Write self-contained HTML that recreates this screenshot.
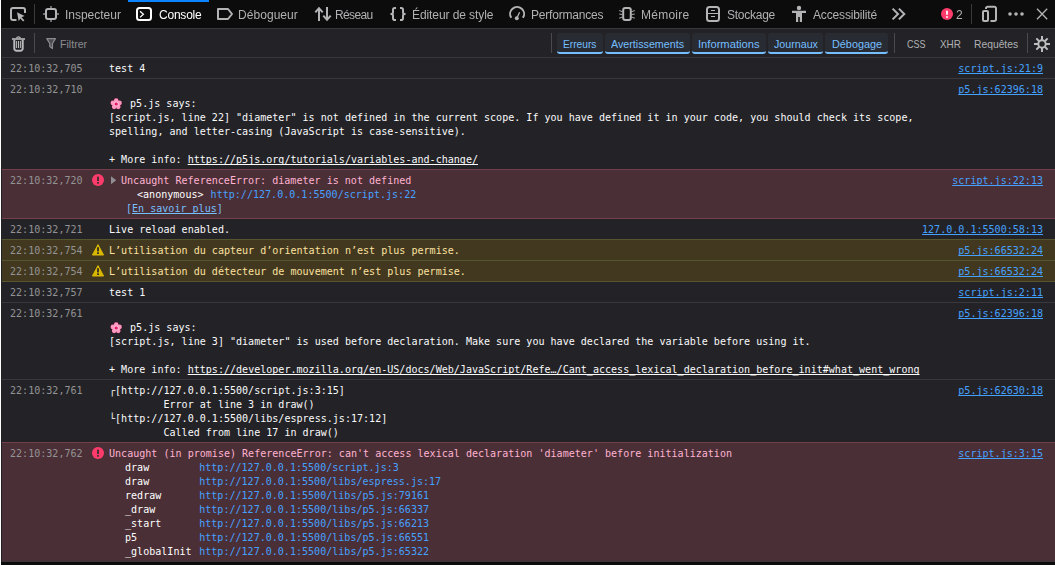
<!DOCTYPE html>
<html lang="fr">
<head>
<meta charset="utf-8">
<title>Console</title>
<style>
html,body{margin:0;padding:0;}
body{width:1055px;height:565px;overflow:hidden;background:#0c0c0d;position:relative;
  font-family:"Liberation Sans",sans-serif;font-size:12px;color:#b1b1b3;}
#edge0{position:absolute;left:0;top:0;width:1px;height:565px;background:#fff;z-index:50;}
#edge1{position:absolute;left:1px;top:28px;width:1px;height:534px;background:#222226;z-index:50;}
#tabs{position:absolute;left:2px;top:0;width:1053px;height:28px;background:#0c0c0d;border-bottom:1px solid #38383d;}
#filter{position:absolute;left:2px;top:29px;width:1053px;height:28px;background:#232327;border-bottom:1px solid #38383d;}
#out{position:absolute;left:2px;top:58px;width:1053px;height:504px;background:#232327;}
.tab{will-change:transform;position:absolute;top:1px;height:28px;line-height:29px;font-size:12px;color:#b1b1b3;white-space:nowrap;transform-origin:0 50%;}
.tab.sel{color:#fff;}
.ico{position:absolute;}
.vsep{position:absolute;width:1px;background:#38383d;}
.row{position:absolute;left:0;width:1053px;box-sizing:border-box;border-bottom:1px solid #38383d;
  font-family:"DejaVu Sans Mono","Liberation Mono",monospace;font-size:10.06px;line-height:14px;color:#fafafb;white-space:pre;}
.row.err{background:#4b2f36;border-top:1px solid #743e4c;border-bottom:1px solid #743e4c;color:#ffb3d2;z-index:2;}
.row.warn{background:#42381f;border-top:1px solid #56562e;border-bottom:1px solid #56562e;color:#fce19f;z-index:2;}
.ts{position:absolute;left:8px;top:4px;color:#939395;}
.msg{position:absolute;left:107px;top:4px;}
.loc{position:absolute;right:12px;top:4px;color:#45a1ff;text-decoration:underline;text-decoration-skip-ink:none;}
.fl{display:inline-block;vertical-align:top;position:relative;top:-0.5px;}
.u{text-decoration:underline;text-decoration-skip-ink:none;}
.fn{display:inline-block;width:74.2px;margin-left:16px;color:#fff;}
.lk{color:#45a1ff;}
.lm{color:#75bfff;}
.w{color:#fff;}
.fbtn{position:absolute;top:4px;height:21px;background:#292b33;border-radius:3px;box-sizing:border-box;border-bottom:2px solid #75bfff;}
.ftx{position:absolute;top:4px;height:22px;line-height:22px;font-size:11px;color:#b1b1b3;white-space:nowrap;transform-origin:0 50%;}
.ftx.on{color:#75bfff;}
.ftx.ph{color:#8c8c90;}
</style>
</head>
<body>
<div id="edge0"></div><div id="edge1"></div>
<div id="tabs">
<svg class="ico" style="left:0;top:0" width="1053" height="28" viewBox="2 0 1053 28" fill="none" stroke="#b4b4b6" stroke-width="2" stroke-linejoin="round">
<rect x="128" y="0" width="81" height="2" fill="#0a84ff" stroke="none"/>
<rect x="34" y="4" width="1" height="20" fill="#3b3b3d" stroke="none"/>
<rect x="971" y="4" width="1" height="20" fill="#38383d" stroke="none"/>
<!-- pick -->
<path d="M16.5 20H13a2 2 0 0 1-2-2V10a2 2 0 0 1 2-2h10a2 2 0 0 1 2 2v3" />
<path d="M17 12.2l7.6 3.9-3.1 1.2 2.9 3-1.3 1.2-2.8-3-1.6 2.7z" fill="#b4b4b6" stroke="none"/>
<!-- inspector -->
<rect x="46" y="9" width="10" height="10" rx="2"/>
<path d="M51 6v2M51 20v2M43 14h2M57 14h2" stroke-width="1.4" stroke-opacity=".8"/>
<!-- console -->
<rect x="137" y="8" width="14" height="12" rx="2.5" stroke="#fff"/>
<path d="M140 11.2l3.4 3-3.4 3.2" stroke="#fff" stroke-width="1.3" stroke-linejoin="miter"/>
<!-- debugger -->
<path d="M218 9h10l4 5-4 5h-10z"/>
<!-- network -->
<path d="M319 21V8M315.3 12.3L319 8.2l3.7 4.1M327 7v13M323.3 15.7l3.700 4.100 3.700-4.100" stroke-linejoin="miter"/>
<!-- style editor -->
<path d="M396 8h-1.200a1.800 1.800 0 0 0-1.800 1.800v2.400q0 1.800-1.800 1.800 1.800 0 1.800 1.800v2.400a1.800 1.800 0 0 0 1.800 1.800h1.200M400 8h1.200a1.800 1.800 0 0 1 1.800 1.800v2.400q0 1.800 1.800 1.800-1.800 0-1.800 1.800v2.400a1.800 1.800 0 0 1-1.800 1.800h-1.200"/>
<!-- perf -->
<path d="M511.300 17.800a7 7 0 1 1 11.600 0"/>
<circle cx="516.800" cy="18.200" r="2" fill="#b4b4b6" stroke="none"/>
<path d="M516.800 18.200l2.800-6" stroke-width="1.300"/>
<!-- memory -->
<rect x="623.200" y="8" width="7.600" height="12" rx="2"/>
<path d="M622.500 11.800l-3.300-1.200M622.500 14.600l-3.300-.6M622.500 17l-3.300 1.200M631.500 11.800l3.300-1.200M631.500 14.600l3.300-.6M631.500 17l3.300 1.200" stroke-width="1.100" stroke-opacity=".85"/>
<!-- storage -->
<rect x="707" y="7" width="12" height="14" rx="2.500"/>
<path d="M707 13.500h12M711 10.500h4M711 16.500h4" stroke-width="1.100"/>
<!-- a11y -->
<g fill="#b4b4b6" stroke="none"><circle cx="799" cy="8" r="2.200"/><path d="M792 10.800h14v2.300h-4v8.900h-2.200v-5h-1.600v5h-2.200v-8.900h-4z"/></g>
<!-- chevrons -->
<path d="M892.600 8.600l5.400 5.400-5.400 5.400M898.900 8.600l5.400 5.400-5.400 5.400" stroke-linejoin="miter"/>
<!-- badge -->
<circle cx="947" cy="14" r="6" fill="#ff3b6b" stroke="none"/>
<rect x="946.100" y="10.400" width="1.800" height="4.600" rx=".9" fill="#fff" stroke="none"/><circle cx="947" cy="16.900" r="1" fill="#fff" stroke="none"/>
<!-- responsive -->
<rect x="983" y="11" width="5" height="10" rx="1"/>
<path d="M986 9V8.500a1.700 1.700 0 0 1 1.700-1.700h6.600a1.700 1.700 0 0 1 1.700 1.700v10.800a1.700 1.700 0 0 1-1.700 1.700H990.500"/>
<!-- dots -->
<g fill="#b4b4b6" stroke="none"><circle cx="1010" cy="14" r="1.800"/><circle cx="1016" cy="14" r="1.800"/><circle cx="1022" cy="14" r="1.800"/></g>
<!-- close -->
<path d="M1037 8.800l10.200 10.400M1047.200 8.800L1037 19.200" stroke-width="1.300"/>
</svg>

<span class="tab" style="left:62.70px;letter-spacing:-0.018px">Inspecteur</span>
<span class="tab sel" style="left:156.50px;letter-spacing:-0.221px">Console</span>
<span class="tab" style="left:236.32px;letter-spacing:0.054px">Débogueur</span>
<span class="tab" style="left:333.36px;letter-spacing:-0.650px">Réseau</span>
<span class="tab" style="left:409.66px;letter-spacing:-0.084px">Éditeur de style</span>
<span class="tab" style="left:529.20px;letter-spacing:-0.196px">Performances</span>
<span class="tab" style="left:639.20px;letter-spacing:0.244px">Mémoire</span>
<span class="tab" style="left:725.00px;letter-spacing:-0.256px">Stockage</span>
<span class="tab" style="left:811.00px;letter-spacing:-0.156px">Accessibilité</span>
<span class="tab" style="left:953.96px;letter-spacing:-0.787px">2</span>
</div>
<div id="filter">
<svg class="ico" style="left:0;top:0" width="1053" height="28" viewBox="2 29 1053 28" fill="none" stroke="#b9b9bb" stroke-width="2" stroke-linejoin="round">
<rect x="34" y="33" width="1" height="20" fill="#4a4a4e" stroke="none"/>
<rect x="551" y="33" width="1" height="20" fill="#4a4a4e" stroke="none"/>
<rect x="894" y="33" width="1" height="20" fill="#4a4a4e" stroke="none"/>
<rect x="1027" y="33" width="1" height="20" fill="#4a4a4e" stroke="none"/>
<!-- trash -->
<path d="M12 39h13" stroke-width="1.600"/>
<path d="M16.600 38.200a2 2 0 0 1 3.800 0" stroke-width="1.300"/>
<path d="M14.300 39.800v8.700a2.300 2.300 0 0 0 2.300 2.300h3.800a2.300 2.300 0 0 0 2.300-2.300V39.800"/>
<path d="M16.600 41v7M18.500 41v7M20.400 41v7" stroke-width="1"/>
<!-- funnel -->
<path d="M46.800 38.700h8.600l-3 4.800v5l-2.600-1.900v-3.100z" stroke="#8a8a8e" stroke-width="1.300" fill="#4a4a4f"/>
<!-- gear -->
<g stroke="#bdbdbf" stroke-width="2"><circle cx="1042" cy="44" r="3.700"/>
<path d="M1042 36v4M1042 48v4M1034 44h4M1046 44h4M1036.340 38.340l2.830 2.830M1044.830 46.830l2.830 2.830M1047.660 38.340l-2.830 2.830M1039.170 46.830l-2.830 2.830" stroke-linecap="butt"/></g>
</svg>

<div class="fbtn" style="left:555px;width:46px"></div>
<div class="fbtn" style="left:603px;width:85px"></div>
<div class="fbtn" style="left:690px;width:74px"></div>
<div class="fbtn" style="left:766px;width:55px"></div>
<div class="fbtn" style="left:823px;width:63px"></div>
<span class="ftx on" style="left:561.08px;transform:scaleX(0.9276)">Erreurs</span>
<span class="ftx on" style="left:609.00px;transform:scaleX(0.9733)">Avertissements</span>
<span class="ftx on" style="left:696.00px;transform:scaleX(1.0159)">Informations</span>
<span class="ftx on" style="left:771.92px;transform:scaleX(0.9710)">Journaux</span>
<span class="ftx on" style="left:829.92px;transform:scaleX(0.9861)">Débogage</span>
<span class="ftx" style="left:904.96px;transform:scaleX(0.8169)">CSS</span>
<span class="ftx" style="left:937.96px;transform:scaleX(0.8998)">XHR</span>
<span class="ftx" style="left:972.08px;transform:scaleX(0.9368)">Requêtes</span>
<span class="ftx ph" style="left:58.08px;transform:scaleX(0.9646)">Filtrer</span>
</div>
<div id="out">
<div class="row" style="top:0;height:21px"><span class="ts">22:10:32,705</span><span class="msg">test 4</span><span class="loc">script.js:21:9</span></div>
<div class="row" style="top:21px;height:91px"><span class="ts">22:10:32,710</span><span class="msg">
<svg class="fl" width="15" height="14" viewBox="0 0 15 14"><g fill="#35101f"><circle cx="7.20" cy="3.50" r="2.9"/><circle cx="10.53" cy="5.92" r="2.9"/><circle cx="9.26" cy="9.83" r="2.9"/><circle cx="5.14" cy="9.83" r="2.9"/><circle cx="3.87" cy="5.92" r="2.9"/></g><g fill="#ff97c0"><circle cx="7.20" cy="3.50" r="2.3"/><circle cx="10.53" cy="5.92" r="2.3"/><circle cx="9.26" cy="9.83" r="2.3"/><circle cx="5.14" cy="9.83" r="2.3"/><circle cx="3.87" cy="5.92" r="2.3"/></g><circle cx="7.2" cy="7.0" r="2.5" fill="#ffb9d6"/><circle cx="7.2" cy="7.0" r="1.6" fill="#e2185f"/></svg> p5.js says:
[script.js, line 22] "diameter" is not defined in the current scope. If you have defined it in your code, you should check its scope,
spelling, and letter-casing (JavaScript is case-sensitive).

+ More info: <span class="u">https://p5js.org/tutorials/variables-and-change/</span></span><span class="loc">p5.js:62396:18</span></div>
<div class="row err" style="top:111px;height:50px"><span class="ts">22:10:32,720</span><svg class="ico" style="left:90px;top:4px" width="12" height="12" viewBox="0 0 12 12"><circle cx="6" cy="6" r="6" fill="#ff3b6b"/><rect x="5" y="2.5" width="2" height="4.5" rx=".6" fill="#4b2f36"/><rect x="5" y="8" width="2" height="1.8" rx=".5" fill="#4b2f36"/></svg><svg class="ico" style="left:108.6px;top:6px" width="6" height="9" viewBox="0 0 6 9"><path d="M0 0.2 L5.2 4.2 L0 8.2Z" fill="#8f8f93"/></svg><span class="msg" style="left:119px">Uncaught ReferenceError: diameter is not defined
<span class="w" style="margin-left:16px">&lt;anonymous&gt;</span> <span class="lk" style="margin-left:1px">http://127.0.0.1:5500/script.js:22</span>
<span class="lm" style="margin-left:5px">[<span class="u">En savoir plus</span>]</span></span><span class="loc" style="right:12px">script.js:22:13</span></div>
<div class="row" style="top:161px;height:21px"><span class="ts">22:10:32,721</span><span class="msg">Live reload enabled.</span><span class="loc">127.0.0.1:5500:58:13</span></div>
<div class="row warn" style="top:181px;height:22px"><span class="ts">22:10:32,754</span><svg class="ico" style="left:90px;top:4px" width="12" height="12" viewBox="0 0 12 12"><path d="M6 0.6 L11.6 11 L0.4 11Z" fill="#d9b800" stroke="#d9b800" stroke-width="1" stroke-linejoin="round"/><rect x="5" y="3.2" width="2" height="4.2" fill="#42381f"/><rect x="5" y="8.3" width="2" height="1.7" fill="#42381f"/></svg><span class="msg">L’utilisation du capteur d’orientation n’est plus permise.</span><span class="loc">p5.js:66532:24</span></div>
<div class="row warn" style="top:202px;height:22px"><span class="ts">22:10:32,754</span><svg class="ico" style="left:90px;top:4px" width="12" height="12" viewBox="0 0 12 12"><path d="M6 0.6 L11.6 11 L0.4 11Z" fill="#d9b800" stroke="#d9b800" stroke-width="1" stroke-linejoin="round"/><rect x="5" y="3.2" width="2" height="4.2" fill="#42381f"/><rect x="5" y="8.3" width="2" height="1.7" fill="#42381f"/></svg><span class="msg">L’utilisation du détecteur de mouvement n’est plus permise.</span><span class="loc">p5.js:66532:24</span></div>
<div class="row" style="top:224px;height:21px"><span class="ts">22:10:32,757</span><span class="msg">test 1</span><span class="loc">script.js:2:11</span></div>
<div class="row" style="top:245px;height:77px"><span class="ts">22:10:32,761</span><span class="msg">
<svg class="fl" width="15" height="14" viewBox="0 0 15 14"><g fill="#35101f"><circle cx="7.20" cy="3.50" r="2.9"/><circle cx="10.53" cy="5.92" r="2.9"/><circle cx="9.26" cy="9.83" r="2.9"/><circle cx="5.14" cy="9.83" r="2.9"/><circle cx="3.87" cy="5.92" r="2.9"/></g><g fill="#ff97c0"><circle cx="7.20" cy="3.50" r="2.3"/><circle cx="10.53" cy="5.92" r="2.3"/><circle cx="9.26" cy="9.83" r="2.3"/><circle cx="5.14" cy="9.83" r="2.3"/><circle cx="3.87" cy="5.92" r="2.3"/></g><circle cx="7.2" cy="7.0" r="2.5" fill="#ffb9d6"/><circle cx="7.2" cy="7.0" r="1.6" fill="#e2185f"/></svg> p5.js says:
[script.js, line 3] "diameter" is used before declaration. Make sure you have declared the variable before using it.

+ More info: <span class="u">https://developer.mozilla.org/en-US/docs/Web/JavaScript/Refe…/Cant_access_lexical_declaration_before_init#what_went_wrong</span></span><span class="loc">p5.js:62396:18</span></div>
<div class="row" style="top:322px;height:63px"><span class="ts">22:10:32,761</span><span class="msg">┌[http://127.0.0.1:5500/script.js:3:15]
	 Error at line 3 in draw()
└[http://127.0.0.1:5500/libs/espress.js:17:12]
	 Called from line 17 in draw()</span><span class="loc">p5.js:62630:18</span></div>
<div class="row err" style="top:384px;height:120px;border-bottom-color:#38383d"><span class="ts">22:10:32,762</span><svg class="ico" style="left:90px;top:4px" width="12" height="12" viewBox="0 0 12 12"><circle cx="6" cy="6" r="6" fill="#ff3b6b"/><rect x="5" y="2.5" width="2" height="4.5" rx=".6" fill="#4b2f36"/><rect x="5" y="8" width="2" height="1.8" rx=".5" fill="#4b2f36"/></svg><span class="msg">Uncaught (in promise) ReferenceError: can't access lexical declaration 'diameter' before initialization
<span class="st"><span class="fn">draw</span><span class="lk">http://127.0.0.1:5500/script.js:3</span>
<span class="fn">draw</span><span class="lk">http://127.0.0.1:5500/libs/espress.js:17</span>
<span class="fn">redraw</span><span class="lk">http://127.0.0.1:5500/libs/p5.js:79161</span>
<span class="fn">_draw</span><span class="lk">http://127.0.0.1:5500/libs/p5.js:66337</span>
<span class="fn">_start</span><span class="lk">http://127.0.0.1:5500/libs/p5.js:66213</span>
<span class="fn">p5</span><span class="lk">http://127.0.0.1:5500/libs/p5.js:66551</span>
<span class="fn">_globalInit</span><span class="lk">http://127.0.0.1:5500/libs/p5.js:65322</span></span></span><span class="loc">script.js:3:15</span></div>
</div>
</body>
</html>
